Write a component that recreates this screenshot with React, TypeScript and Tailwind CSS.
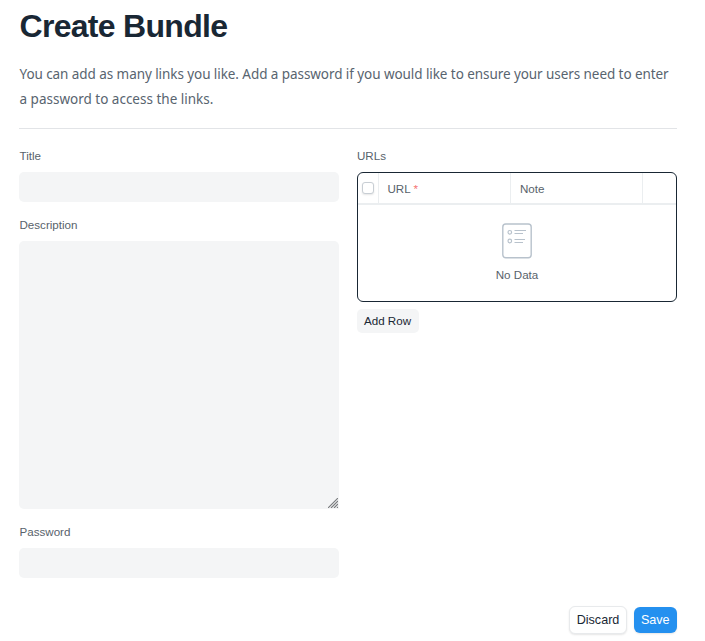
import React from "react";

function Label({ children }: { children: React.ReactNode }) {
  return <label className="block h-4 pl-[0.5px] text-[11.6px] leading-4 text-[#58626b]">{children}</label>;
}

function ResizeGrip() {
  return (
    <svg className="pointer-events-none absolute right-px bottom-px" width="10" height="10" viewBox="0 0 10 10" fill="none" stroke="#77797c" strokeWidth="1.1">
      <path d="M0 10 10 0M3 10l7-7M6 10l4-4M9 10l1-1" />
    </svg>
  );
}

function ListIcon() {
  return (
    <svg width="30" height="36" viewBox="0 0 30 36" fill="none" stroke="#b8c2cc" strokeWidth="1">
      <rect x="0.8" y="1" width="28.4" height="33.8" rx="3" strokeWidth="1.4" />
      <circle cx="7.8" cy="9.3" r="1.8" strokeWidth="1.2" />
      <circle cx="7.8" cy="18" r="1.8" strokeWidth="1.2" />
      <path d="M12.5 7.5H24M12.5 10.5H21M12.5 16.5H23M12.5 19.5H21" />
    </svg>
  );
}

export default function App() {
  return (
    <main className="h-[641px] w-[705px] overflow-hidden bg-white pr-7 pl-[19px] font-['Liberation_Sans',sans-serif]">
      <h1 className="h-[61px] pt-[7px] pl-[0.5px] text-[32px] leading-[38px] font-bold tracking-[-0.7px] whitespace-nowrap text-[#192734]">Create Bundle</h1>
      <p className="h-[67px] pt-px pl-[0.5px] font-['Noto_Sans',sans-serif] text-[13.5px] leading-[25px] whitespace-nowrap text-[#58646f]">
        <span className="tracking-[-0.07px]">You can add as many links you like. Add a password if you would like to ensure your users need to enter</span>
        <br />
        <span>a password to access the links.</span>
      </p>
      <form className="border-t border-[#e2e4e7] pt-[19px]" onSubmit={(e) => e.preventDefault()}>
        <div className="flex gap-[18px]">
          <div className="w-80">
            <Label>Title</Label>
            <input className="mt-2 block h-[30px] w-full rounded-[5px] bg-[#f4f5f6] px-2" />
            <div className="mt-[15px]">
              <Label>Description</Label>
            </div>
            <div className="relative mt-2">
              <textarea className="block h-[268px] w-full resize-none rounded-[5px] rounded-br-[1px] bg-[#f4f5f6] p-2" />
              <ResizeGrip />
            </div>
            <div className="mt-[15px]">
              <Label>Password</Label>
            </div>
            <input type="password" className="mt-2 block h-[30px] w-full rounded-[5px] bg-[#f4f5f6] px-2" />
          </div>
          <div className="w-80">
            <div className="-ml-[0.5px]">
              <Label>URLs</Label>
            </div>
            <div className="mt-2 h-[130px] overflow-hidden rounded-[6px] border border-[#192734] text-[11.6px] text-[#58626b]">
              <div className="flex h-8 border-b-2 border-[#ebeef0] leading-8">
                <div className="w-[21px] border-r border-[#ebeef0] pt-[9px] pl-1">
                  <div className="h-3 w-3 rounded-[3px] border border-[#c8ced4] bg-white shadow-[0_1px_2px_rgba(0,0,0,0.1)]" />
                </div>
                <div className="w-[132px] border-r border-[#ebeef0] pl-[8.5px]">URL <span className="text-[#f57373]">*</span></div>
                <div className="w-[132px] border-r border-[#ebeef0] pl-[9px]">Note</div>
              </div>
              <div className="flex flex-col items-center pt-[18px]">
                <ListIcon />
                <span className="mt-2 leading-4">No Data</span>
              </div>
            </div>
            <button className="mt-[7px] h-6 w-[62px] rounded-[5px] bg-[#f4f5f6] pr-px text-[11.6px] whitespace-nowrap text-[#192734]">Add Row</button>
          </div>
        </div>
        <div className="mt-7 flex items-center justify-end gap-[6.5px]">
          <button className="h-7 w-[58px] rounded-[6px] border border-[#e8eaec] bg-white text-[12.6px] text-[#192734] shadow-[0_1px_2px_rgba(0,0,0,0.1)]">Discard</button>
          <button className="h-[26px] w-[43.5px] rounded-[6px] bg-[#2490ef] text-[12.6px] text-white shadow-[0_1px_2px_rgba(0,0,0,0.1)]">Save</button>
        </div>
      </form>
    </main>
  );
}
